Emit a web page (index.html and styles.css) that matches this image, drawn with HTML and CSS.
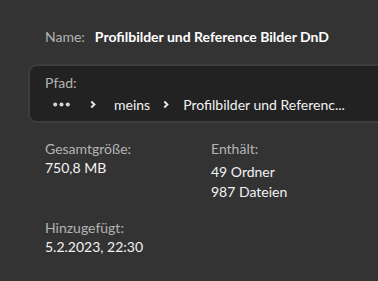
FILE: index.html
```html
<!DOCTYPE html>
<html lang="de">
<head>
    <meta charset="UTF-8">
    <title>Eigenschaften</title>
    <link rel="stylesheet" href="styles.css">
</head>
<body>
    <div class="details">
        <div class="name-row">
            <span class="label">Name:</span>
            <span class="name-value">Profilbilder und Reference Bilder DnD</span>
        </div>

        <div class="path-box">
            <div class="label">Pfad:</div>
            <div class="crumbs">
                <svg class="crumb-more" width="17" height="5" viewBox="0 0 17 5">
                    <circle cx="2.2" cy="2.5" r="2" />
                    <circle cx="8.5" cy="2.5" r="2" />
                    <circle cx="14.8" cy="2.5" r="2" />
                </svg>
                <svg class="crumb-sep" width="6" height="9" viewBox="0 0 6 9">
                    <path d="M1.3 1.5 L4.4 4.5 L1.3 7.5" />
                </svg>
                <span class="crumb">meins</span>
                <svg class="crumb-sep" width="6" height="9" viewBox="0 0 6 9">
                    <path d="M1.3 1.5 L4.4 4.5 L1.3 7.5" />
                </svg>
                <span class="crumb">Profilbilder und Referenc...</span>
            </div>
        </div>

        <div class="info-grid">
            <div class="info">
                <div class="label">Gesamtgröße:</div>
                <div class="value">750,8 MB</div>
            </div>
            <div class="info">
                <div class="label">Enthält:</div>
                <ul class="value-list">
                    <li>49 Ordner</li>
                    <li>987 Dateien</li>
                </ul>
            </div>
            <div class="info">
                <div class="label">Hinzugefügt:</div>
                <div class="value">5.2.2023, 22:30</div>
            </div>
        </div>
    </div>
</body>
</html>
```

FILE: styles.css
```css
/* General styles */
body {
    margin: 0;
    padding: 0;
    background-color: #333333;
    color: #f2f2f2;
    font-family: Lato, "Open Sans", sans-serif;
    font-size: 14px;
    line-height: 17px;
    overflow: hidden;
}

.details {
    padding: 28px 0 0 45px;
}

.label {
    color: #b4b4b4;
}

/* Name row */
.name-row {
    display: flex;
    gap: 10px;
}

.name-value {
    font-weight: bold;
    color: #ffffff;
}

/* Path box */
.path-box {
    margin: 19px -20px 0 -17px;
    padding: 8px 0 8px 15px;
    background-color: #222222;
    border: 2px solid #3d3d3d;
    border-radius: 9px;
}

.crumbs {
    display: flex;
    align-items: center;
    margin-top: 5px;
    padding-left: 8px;
    color: #f2f2f2;
}

.crumb-more {
    fill: #d6d6d6;
    margin-right: 20px;
}

.crumb-sep {
    fill: none;
    stroke: #e6e6e6;
    stroke-width: 2;
    margin-right: 14px;
}

.crumb-more + .crumb-sep {
    margin-right: 18px;
}

.crumb {
    margin-right: 13px;
}

/* Info grid */
.info-grid {
    display: grid;
    grid-template-columns: 166px 1fr;
    row-gap: 19px;
    margin-top: 17px;
}

.value {
    margin-top: 2px;
}

.value-list {
    list-style: none;
    margin: 6px 0 0;
    padding: 0;
}

.value-list li + li {
    margin-top: 3px;
}
```
